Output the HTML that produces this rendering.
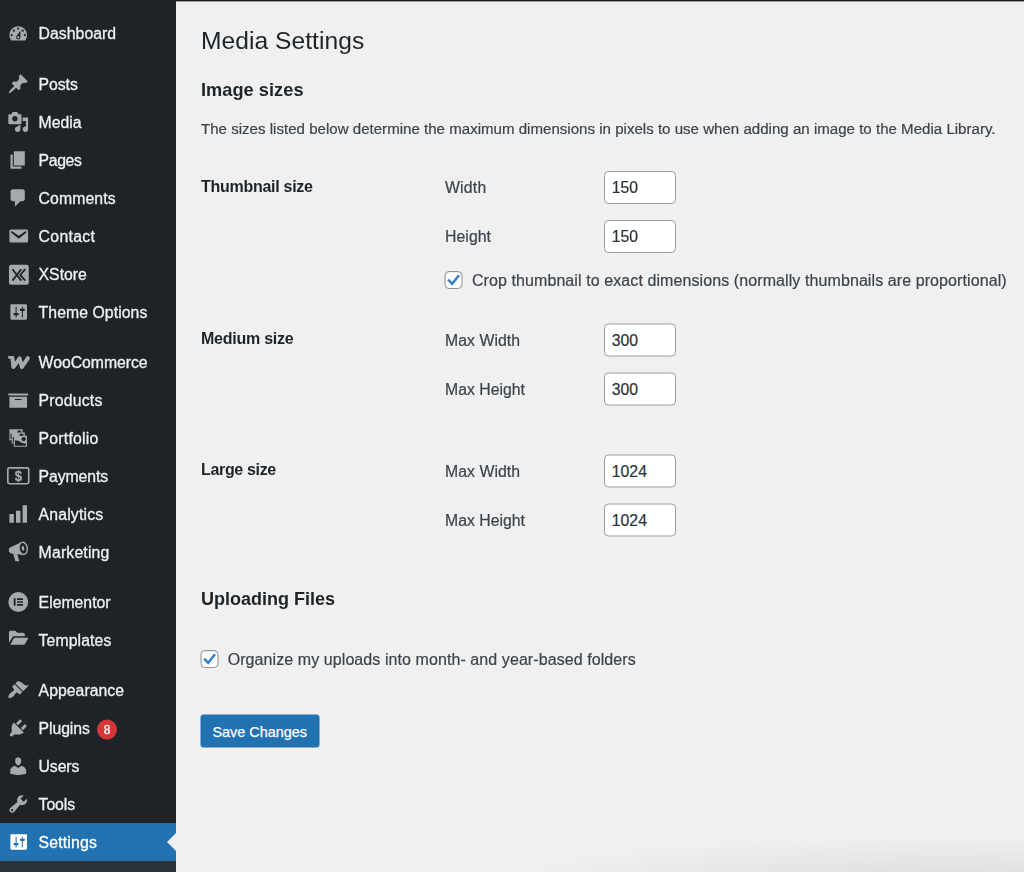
<!DOCTYPE html>
<html lang="en">
<head>
<meta charset="utf-8">
<title>Media Settings</title>
<style>
html,body{margin:0;padding:0;}
body{width:1024px;height:872px;overflow:hidden;position:relative;background:#f0f0f1;font-family:"Liberation Sans",Arial,sans-serif;color:#3c434a;}
#topbar{position:absolute;left:0;top:0;width:1024px;height:1px;background:#171b1e;}
#topbar2{position:absolute;left:0;top:1px;width:1024px;height:1px;background:#9c9ea0;}
#side{position:absolute;left:0;top:0;width:176px;height:872px;background:#1d2327;will-change:transform;}
#sub{position:absolute;left:0;top:861px;width:176px;height:11px;background:#2c3338;}
.mi{position:absolute;left:0;width:176px;height:38px;color:#f0f0f1;}
.mi .ic{overflow:visible;position:absolute;left:7px;top:8px;width:22px;height:22px;fill:#a7aaad;color:#a7aaad;}
.mi .mt{-webkit-text-stroke:.3px currentColor;position:absolute;left:38.6px;font-size:15.8px;line-height:20px;white-space:nowrap;}
.mi.act{background:#2271b1;color:#fff;}
.mi.act .ic{fill:#fff;color:#fff;}
.mi.act:after{content:"";position:absolute;right:0;top:10.2px;border:9.4px solid transparent;border-right-color:#f0f0f1;border-left-width:0;}
.badge{-webkit-text-stroke:.3px #fff;transform:translateY(.6px);position:absolute;left:97px;top:10px;width:20px;height:20px;border-radius:10px;background:#d63638;color:#fff;font-size:12px;line-height:20px;text-align:center;}
.t{position:absolute;white-space:nowrap;}
.h1{color:#1d2327;}
.h2{color:#1d2327;font-weight:bold;}
.th{color:#1d2327;font-weight:bold;}
.p{color:#3c434a;-webkit-text-stroke:.2px currentColor;}
.lb{color:#3c434a;-webkit-text-stroke:.2px currentColor;}
.inp{position:absolute;box-sizing:border-box;border:1px solid #9a9da1;border-radius:4.4px;background:#fff;}
.inp span{-webkit-text-stroke:.2px currentColor;position:absolute;left:6.8px;top:6.25px;font-size:15.8px;line-height:20px;color:#2c3338;}
.cb{position:absolute;box-sizing:border-box;border:1px solid #8c8f94;border-radius:4.4px;background:#fff;box-shadow:inset 0 1px 2px rgba(0,0,0,.1);}
.cb svg{position:absolute;left:-1px;top:-1px;width:18px;height:18px;}
.btn{position:absolute;box-sizing:border-box;background:#2271b1;border-radius:3.3px;color:#fff;}
.btn span{-webkit-text-stroke:.25px currentColor;position:absolute;left:12px;font-size:14.4px;line-height:20px;white-space:nowrap;}
#shade{position:absolute;left:480px;top:826px;width:544px;height:46px;background:radial-gradient(ellipse 490px 58px at 470px 64px, rgba(0,0,0,.09), rgba(0,0,0,0) 100%);}
#wrap{position:absolute;left:0;top:0;width:1024px;height:872px;opacity:.999;}
</style>
</head>
<body>
<div id="wrap">
<div id="shade"></div>
<div id="topbar"></div><div id="topbar2"></div>
<div id="side">
<div class="mi" style="top:15px"><svg class="ic" viewBox="-.2 0 20 20"><path d="M3.76 16h12.48c1.1-1.37 1.76-3.11 1.76-5 0-4.42-3.58-8-8-8s-8 3.58-8 8c0 1.89.66 3.63 1.76 5zM10 4c.55 0 1 .45 1 1s-.45 1-1 1-1-.45-1-1 .45-1 1-1zM6 6c.55 0 1 .45 1 1s-.45 1-1 1-1-.45-1-1 .45-1 1-1zm8 0c.55 0 1 .45 1 1s-.45 1-1 1-1-.45-1-1 .45-1 1-1zm-5.37 5.55L12 7v6c0 1.1-.9 2-2 2s-2-.9-2-2c0-.57.24-1.08.63-1.45zM4 10c.55 0 1 .45 1 1s-.45 1-1 1-1-.45-1-1 .45-1 1-1zm12 0c.55 0 1 .45 1 1s-.45 1-1 1-1-.45-1-1 .45-1 1-1zm-5 3c0-.55-.45-1-1-1s-1 .45-1 1 .45 1 1 1 1-.45 1-1z"/></svg><span class="mt" style="letter-spacing:0.03px;top:9px">Dashboard</span></div>
<div class="mi" style="top:65px"><svg class="ic" viewBox="-.2 0 20 20"><path d="M10.44 3.02l1.82-1.82 6.36 6.35-1.83 1.82c-1.05-.68-2.48-.57-3.41.36l-.75.75c-.92.93-1.04 2.35-.35 3.41l-1.83 1.82-2.41-2.41-2.8 2.79c-.42.42-3.38 2.71-3.8 2.29s1.86-3.39 2.28-3.81l2.79-2.79L4.1 9.36l1.83-1.82c1.05.69 2.48.57 3.4-.36l.75-.75c.93-.92 1.05-2.35.36-3.41z"/></svg><span class="mt" style="letter-spacing:-0.07px;transform:translateY(0.5px);top:9px">Posts</span></div>
<div class="mi" style="top:103px"><svg class="ic" viewBox="-.2 0 20 20"><path d="M13 11V4c0-.55-.45-1-1-1h-1.67L9 1H5L3.67 3H2c-.55 0-1 .45-1 1v7c0 .55.45 1 1 1h10c.55 0 1-.45 1-1zM7 4.5c1.38 0 2.5 1.12 2.5 2.5S8.38 9.5 7 9.5 4.5 8.38 4.5 7 5.62 4.5 7 4.5zM14 6h5v10.5c0 1.38-1.12 2.5-2.5 2.5S14 17.88 14 16.5s1.12-2.5 2.5-2.5c.17 0 .34.02.5.05V9h-3V6zm-4 8.05V13h2v3.5c0 1.38-1.12 2.5-2.5 2.5S7 17.88 7 16.5 8.12 14 9.5 14c.17 0 .34.02.5.05z"/></svg><span class="mt" style="letter-spacing:-0.01px;transform:translateY(0.5px);top:9px">Media</span></div>
<div class="mi" style="top:141px"><svg class="ic" viewBox="-.2 0 20 20"><path d="M6 15V2h10v13H6zm-1 1h8v2H3V5h2v11z"/></svg><span class="mt" style="letter-spacing:-0.39px;transform:translateY(0.5px);top:9px">Pages</span></div>
<div class="mi" style="top:179px"><svg class="ic" viewBox="-.2 0 20 20"><path d="M5 2h9c1.1 0 2 .9 2 2v7c0 1.1-.9 2-2 2h-2l-5 5v-5H5c-1.1 0-2-.9-2-2V4c0-1.1.9-2 2-2z"/></svg><span class="mt" style="letter-spacing:0.09px;transform:translateY(0.5px);top:9px">Comments</span></div>
<div class="mi" style="top:217px"><svg class="ic" viewBox="-.2 0 20 20"><path d="M3.87 4h13.25C18.37 4 19 4.59 19 5.79v8.42c0 1.19-.63 1.79-1.88 1.79H3.87c-1.25 0-1.88-.6-1.88-1.79V5.79c0-1.2.630-1.79 1.88-1.79zm6.62 8.6l6.74-5.53c.24-.2.43-.66.13-1.07-.29-.41-.82-.42-1.17-.17l-5.7 3.86L4.8 5.83c-.35-.25-.88-.24-1.17.170-.3.41-.11.87.130 1.07z"/></svg><span class="mt" style="letter-spacing:0.30px;transform:translateY(0.5px);top:9px">Contact</span></div>
<div class="mi" style="top:255px"><svg class="ic" viewBox="-.2 0 20 20"><rect x="1.6" y="1.6" width="18" height="18.2" rx="1.8"/><path d="M4.8 5.6l7.9 10.4M12.7 5.6L4.8 16M16.4 5.6l-4.6 5.2 4.6 5.2" stroke="#1d2327" stroke-width="1.6" fill="none"/></svg><span class="mt" style="letter-spacing:-0.01px;transform:translateY(0.5px);top:9px">XStore</span></div>
<div class="mi" style="top:293px"><svg class="ic" viewBox="-.2 0 20 20"><path transform="translate(18,0) scale(.945,1) translate(-18,0)" d="M18 16V4c0-.55-.45-1-1-1H3c-.55 0-1 .45-1 1v12c0 .55.45 1 1 1h14c.55 0 1-.45 1-1zM8 11h1c.55 0 1 .45 1 1s-.45 1-1 1H8v1.5c0 .28-.22.5-.5.5s-.5-.22-.5-.5V13H6c-.55 0-1-.45-1-1s.45-1 1-1h1V5.5c0-.28.22-.5.5-.5s.5.22.5.5V11zm5-2h-1c-.55 0-1-.45-1-1s.45-1 1-1h1V5.5c0-.28.22-.5.5-.5s.5.22.5.5V7h1c.55 0 1 .45 1 1s-.45 1-1 1h-1v5.5c0 .28-.22.5-.5.5s-.5-.22-.5-.5V9z"/></svg><span class="mt" style="letter-spacing:0.06px;transform:translateY(0.5px);top:9px">Theme Options</span></div>
<div class="mi" style="top:343px"><svg class="ic" viewBox="-.2 0 20 20"><g transform="translate(0,.6)" fill="none" stroke="currentColor" stroke-linejoin="round" stroke-linecap="round"><path d="M4.7 5.8L5.6 14l5.7-7.9 2 7.9 5.5-8.2" stroke-width="3.6"/><path d="M1.9 5.2H5" stroke-width="2.5"/></g></svg><span class="mt" style="letter-spacing:-0.04px;transform:translateY(0.5px);top:9px">WooCommerce</span></div>
<div class="mi" style="top:381px"><svg class="ic" viewBox="-.2 0 20 20"><path d="M19 4v2H1V4h18zM2 7h16v10H2V7zm11 3V9H7v1h6z"/></svg><span class="mt" style="letter-spacing:0.20px;transform:translateY(0.5px);top:9px">Products</span></div>
<div class="mi" style="top:419px"><svg class="ic" viewBox="-.2 0 20 20"><path d="M4 15v-3H2V2h12v3h2v3h2v10H6v-3H4zm7-12c-1.1 0-2 .900-2 2h4c0-1.1-.890-2-2-2zm-7 8V6H3v5h1zm7-3h4c0-1.1-.890-2-2-2-1.1 0-2 .900-2 2zm-5 6V9H5v5h1zm9-1c1.1 0 2-.890 2-2 0-1.1-.900-2-2-2s-2 .900-2 2c0 1.11.900 2 2 2zm2 4v-2c-5 0-5-3-10-3v5h10z"/></svg><span class="mt" style="letter-spacing:0.21px;transform:translateY(0.5px);top:9px">Portfolio</span></div>
<div class="mi" style="top:457px"><svg class="ic" viewBox="-.2 0 20 20"><rect x="0.55" y="2.65" width="19" height="14.4" rx="1.5" fill="none" stroke="currentColor" stroke-width="1.5"/><text transform="translate(10.05,14.3) scale(.880,1)" font-family="Liberation Sans, sans-serif" font-weight="bold" font-size="13.5" text-anchor="middle" stroke="currentColor" stroke-width=".300">$</text></svg><span class="mt" style="letter-spacing:-0.11px;transform:translateY(0.5px);top:9px">Payments</span></div>
<div class="mi" style="top:495px"><svg class="ic" viewBox="-.2 0 20 20"><path d="M18 18V2h-4v16h4zm-6 0V7H8v11h4zm-6 0v-8H2v8h4z"/></svg><span class="mt" style="letter-spacing:0.16px;transform:translateY(0.5px);top:9px">Analytics</span></div>
<div class="mi" style="top:533px"><svg class="ic" viewBox="-.2 0 20 20"><path d="M2.5 5.8L13.2 1l2 11.8L3.5 11.3Q1.4 11 1.4 8.4 1.4 6.4 2.5 5.8zM5.4 11.6l3.9.700 1.5 5.7q.100.5-.400.5H8q-.500 0-.700-.500z"/><g transform="rotate(-9 14.5 6.7)"><ellipse cx="14.5" cy="6.7" rx="4.4" ry="6.2"/><ellipse cx="14.5" cy="6.7" rx="3.1" ry="4.9" fill="#1d2327"/><ellipse cx="14.3" cy="6.7" rx="1.2" ry="2.1"/></g></svg><span class="mt" style="letter-spacing:0.17px;transform:translateY(0.5px);top:9px">Marketing</span></div>
<div class="mi" style="top:583px"><svg class="ic" viewBox="-.2 0 20 20"><path d="M10.05 1a9 9 0 100 18 9 9 0 000-18zM7.6 13.4H5.9V6.6h1.7v6.8zm6.7 0H8.9v-1.5h5.4v1.5zm0-2.65H8.9v-1.5h5.4v1.5zm0-2.65H8.9V6.6h5.4v1.5z" fill-rule="evenodd"/></svg><span class="mt" style="letter-spacing:0.00px;transform:translateY(0.5px);top:9px">Elementor</span></div>
<div class="mi" style="top:621px"><svg class="ic" viewBox="-.2 0 20 20"><path d="M1.6 12.6V3a1.5 1.5 0 011.5-1.5h4.2l1.8 1.8h5.4a1.5 1.5 0 011.5 1.5v1.9H6.3a1.9 1.9 0 00-1.7 1zM2.8 14.3l3.1-5.7a1.1 1.1 0 011-.6h11.5a.6.6 0 01.5.9l-2.7 4.6a1.6 1.6 0 01-1.4.8z"/></svg><span class="mt" style="letter-spacing:0.09px;transform:translateY(0.5px);top:9px">Templates</span></div>
<div class="mi" style="top:671px"><svg class="ic" viewBox="-.2 0 20 20"><path d="M14.48 11.06L7.41 3.99l1.5-1.5c.5-.56 2.3-.47 3.51.32 1.21.8 1.43 1.28 2.91 2.1 1.18.64 2.45 1.26 4.45.85zm-.71.71L6.7 4.7 4.93 6.47c-.39.39-.39 1.02 0 1.41l1.06 1.06c.39.39.39 1.03 0 1.42-.6.6-1.43 1.11-2.21 1.69-.35.26-.7.53-1.01.84C1.43 14.23.4 16.08 1.4 17.07c.99 1 2.84-.03 4.18-1.36.31-.31.58-.66.85-1.02.57-.78 1.08-1.61 1.69-2.21.39-.39 1.02-.39 1.41 0l1.06 1.06c.39.39 1.02.39 1.41 0z"/></svg><span class="mt" style="letter-spacing:0.03px;transform:translateY(0.5px);top:9px">Appearance</span></div>
<div class="mi" style="top:709px"><svg class="ic" viewBox="-.2 0 20 20"><path d="M13.11 4.36L9.87 7.6 8 5.73l3.24-3.24c.35-.34 1.05-.2 1.56.32.52.51.66 1.21.31 1.55zm-8 1.77l.91-1.12 9.01 9.01-1.19.84c-.71.71-2.63 1.16-3.82 1.16H6.14L4.9 17.26c-.59.59-1.54.59-2.12 0-.59-.58-.59-1.53 0-2.12L4.02 13.9v-3.88c0-1.13.39-3.19 1.09-3.89zm7.26 3.97l3.24-3.24c.34-.35 1.04-.21 1.55.31.52.51.66 1.21.31 1.55l-3.24 3.25z"/></svg><span class="mt" style="letter-spacing:-0.09px;transform:translateY(0.5px);top:9px">Plugins</span><span class="badge">8</span></div>
<div class="mi" style="top:747px"><svg class="ic" viewBox="-.2 0 20 20"><path d="M10 9.25c-2.27 0-2.73-3.44-2.73-3.44C7 4.02 7.82 2 9.97 2c2.16 0 2.98 2.02 2.71 3.81 0 0-.41 3.44-2.68 3.44zm0 2.57L12.72 10c2.39 0 4.52 2.33 4.52 4.53v2.49s-3.65 1.13-7.24 1.13c-3.65 0-7.24-1.13-7.24-1.13v-2.49c0-2.25 1.94-4.48 4.47-4.48z"/></svg><span class="mt" style="letter-spacing:-0.13px;transform:translateY(0.5px);top:9px">Users</span></div>
<div class="mi" style="top:785px"><svg class="ic" viewBox="-.2 0 20 20"><path d="M16.68 9.77c-1.34 1.34-3.3 1.67-4.95.99l-5.41 6.52c-.99.99-2.59.99-3.58 0s-.99-2.59 0-3.57l6.52-5.42c-.68-1.65-.35-3.61.99-4.95 1.28-1.28 3.12-1.62 4.72-1.06l-2.89 2.89 2.82 2.82 2.86-2.87c.53 1.58.18 3.39-1.08 4.65zM3.81 16.21c.4.39 1.04.39 1.43 0 .4-.4.4-1.04 0-1.43-.39-.4-1.03-.4-1.43 0-.39.39-.39 1.03 0 1.43z"/></svg><span class="mt" style="letter-spacing:-0.10px;transform:translateY(0.5px);top:9px">Tools</span></div>
<div class="mi act" style="top:823px"><svg class="ic" viewBox="-.2 0 20 20"><path transform="translate(18,0) scale(.945,1) translate(-18,0)" d="M18 16V4c0-.55-.45-1-1-1H3c-.55 0-1 .45-1 1v12c0 .55.45 1 1 1h14c.55 0 1-.45 1-1zM8 11h1c.55 0 1 .45 1 1s-.45 1-1 1H8v1.5c0 .28-.22.5-.5.5s-.5-.22-.5-.5V13H6c-.55 0-1-.45-1-1s.45-1 1-1h1V5.5c0-.28.22-.5.5-.5s.5.22.5.5V11zm5-2h-1c-.55 0-1-.45-1-1s.45-1 1-1h1V5.5c0-.28.22-.5.5-.5s.5.22.5.5V7h1c.55 0 1 .45 1 1s-.45 1-1 1h-1v5.5c0 .28-.22.5-.5.5s-.5-.22-.5-.5V9z"/></svg><span class="mt" style="letter-spacing:0.17px;transform:translateY(0.5px);top:9px">Settings</span></div>
<div id="sub"></div>
</div>
<div id="main">
<div class="t h1" style="letter-spacing:0.04px;left:201px;top:26px;font-size:24.6px;line-height:30px;">Media Settings</div>
<div class="t h2" style="letter-spacing:0.04px;left:201px;top:78px;font-size:18.2px;line-height:24px;">Image sizes</div>
<div class="t p" style="letter-spacing:0.01px;left:201px;top:119px;font-size:15.07px;line-height:20px;">The sizes listed below determine the maximum dimensions in pixels to use when adding an image to the Media Library.</div>
<div class="t th" style="letter-spacing:-0.28px;left:201px;top:177px;font-size:16px;line-height:20px;">Thumbnail size</div>
<div class="t lb" style="letter-spacing:0.21px;left:445px;top:178px;font-size:15.8px;line-height:20px;">Width</div>
<div class="inp" style="left:604px;top:171px;width:72px;height:33px;"><span>150</span></div>
<div class="t lb" style="letter-spacing:0.07px;left:445px;top:227px;font-size:15.8px;line-height:20px;">Height</div>
<div class="inp" style="left:604px;top:220px;width:72px;height:33px;"><span>150</span></div>
<div class="cb" style="left:444px;top:271px;width:17.6px;height:17.6px;transform:translate(0.5px,0px);"><svg viewBox="0 0 18 18"><path d="M3.7 8.7l4 4.1 6.8-8.6" fill="none" stroke="#3582c4" stroke-width="2.5"/></svg></div>
<div class="t lb" style="letter-spacing:0.09px;transform:translateY(0.5px);left:471.9px;top:270px;font-size:16px;line-height:20px;">Crop thumbnail to exact dimensions (normally thumbnails are proportional)</div>
<div class="t th" style="letter-spacing:-0.24px;left:201px;top:329px;font-size:16px;line-height:20px;">Medium size</div>
<div class="t lb" style="letter-spacing:0.05px;left:445px;top:331px;font-size:15.8px;line-height:20px;">Max Width</div>
<div class="inp" style="left:604px;top:323px;width:72px;height:33px;transform:translate(0px,0.5px);"><span>300</span></div>
<div class="t lb" style="letter-spacing:0.01px;transform:translateY(0.5px);left:445px;top:379px;font-size:15.8px;line-height:20px;">Max Height</div>
<div class="inp" style="left:604px;top:372px;width:72px;height:33px;transform:translate(0px,0.5px);"><span>300</span></div>
<div class="t th" style="letter-spacing:-0.34px;left:201px;top:460px;font-size:16px;line-height:20px;">Large size</div>
<div class="t lb" style="letter-spacing:0.05px;left:445px;top:462px;font-size:15.8px;line-height:20px;">Max Width</div>
<div class="inp" style="left:604px;top:454px;width:72px;height:33px;transform:translate(0px,0.5px);"><span>1024</span></div>
<div class="t lb" style="letter-spacing:0.01px;transform:translateY(0.5px);left:445px;top:510px;font-size:15.8px;line-height:20px;">Max Height</div>
<div class="inp" style="left:604px;top:503px;width:72px;height:33px;transform:translate(0px,0.5px);"><span>1024</span></div>
<div class="t h2" style="letter-spacing:-0.00px;left:201px;top:587px;font-size:18px;line-height:24px;">Uploading Files</div>
<div class="cb" style="left:200px;top:650px;width:17.6px;height:17.6px;transform:translate(0.5px,0px);"><svg viewBox="0 0 18 18"><path d="M3.7 8.7l4 4.1 6.8-8.6" fill="none" stroke="#3582c4" stroke-width="2.5"/></svg></div>
<div class="t lb" style="letter-spacing:0.08px;left:227.7px;top:650px;font-size:16px;line-height:20px;">Organize my uploads into month- and year-based folders</div>
<div class="btn" style="left:200px;top:714px;width:119px;height:33px;transform:translate(0.5px,0.5px);"><span style="letter-spacing:0.01px;top:7px">Save Changes</span></div>
</div>
</div>
</body>
</html>
